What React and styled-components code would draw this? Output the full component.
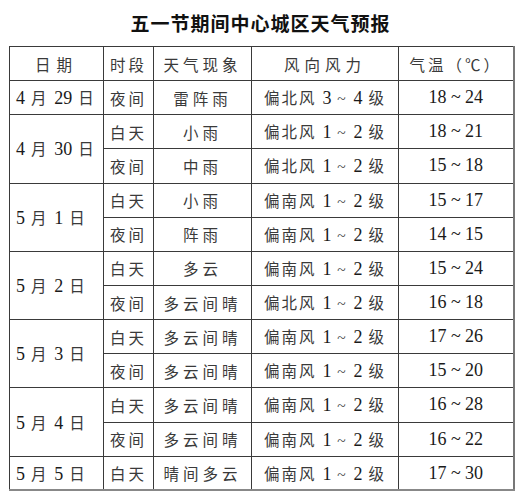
import React from "react";
import styled, { createGlobalStyle } from "styled-components";

const GlobalStyle = createGlobalStyle`
  html, body {
    margin: 0;
    padding: 0;
    background: #ffffff;
  }
`;

const Page = styled.div`
  width: 525px;
  height: 500px;
  box-sizing: border-box;
  padding: 9px 0 0 9px;
  font-family: "Liberation Serif", "Noto Sans CJK SC", serif;
  color: #333;
`;

const Title = styled.h1`
  margin: 0;
  width: 503px;
  height: 28px;
  line-height: 28px;
  text-align: center;
  font-family: "Noto Sans CJK SC", sans-serif;
  font-size: 19px;
  font-weight: 700;
  letter-spacing: 1px;
  color: #111;
`;

const Table = styled.table`
  margin-top: 9px;
  width: 504px;
  border-collapse: collapse;
  table-layout: fixed;
  border-right: 2px solid #777;
  border-bottom: 2px solid #888;
`;

const Cell = styled.td`
  height: 34.15px;
  padding: 0;
  box-sizing: border-box;
  border: 1px solid #3a3a3a;
  font-size: ${(p) => (p.num ? "18px" : "15.5px")};
  letter-spacing: ${(p) => p.spacing || "4px"};
  text-align: ${(p) => (p.left ? "left" : "center")};
  padding-left: ${(p) => (p.left ? "6px" : "0")};
  white-space: nowrap;
  color: #3a3a3a;
`;

const HeadCell = styled(Cell).attrs({ as: "th" })`
  font-weight: 400;
`;

const Num = styled.span`
  font-family: "Liberation Serif", serif;
  font-size: 18px;
  letter-spacing: 0;
  color: #1a1a1a;
`;

const Temp = styled(Cell)`
  font-family: "Liberation Serif", serif;
  color: #1a1a1a;
`;

const rows = [
  { date: ["4", "29"], items: [["夜间", "雷阵雨", "北", "3", "4", "18 ~ 24"]] },
  {
    date: ["4", "30"],
    items: [
      ["白天", "小雨", "北", "1", "2", "18 ~ 21"],
      ["夜间", "中雨", "北", "1", "2", "15 ~ 18"],
    ],
  },
  {
    date: ["5", "1"],
    items: [
      ["白天", "小雨", "南", "1", "2", "15 ~ 17"],
      ["夜间", "阵雨", "南", "1", "2", "14 ~ 15"],
    ],
  },
  {
    date: ["5", "2"],
    items: [
      ["白天", "多云", "南", "1", "2", "15 ~ 24"],
      ["夜间", "多云间晴", "北", "1", "2", "16 ~ 18"],
    ],
  },
  {
    date: ["5", "3"],
    items: [
      ["白天", "多云间晴", "南", "1", "2", "17 ~ 26"],
      ["夜间", "多云间晴", "南", "1", "2", "15 ~ 20"],
    ],
  },
  {
    date: ["5", "4"],
    items: [
      ["白天", "多云间晴", "南", "1", "2", "16 ~ 28"],
      ["夜间", "多云间晴", "南", "1", "2", "16 ~ 22"],
    ],
  },
  { date: ["5", "5"], items: [["白天", "晴间多云", "南", "1", "2", "17 ~ 30"]] },
];

const DateLabel = ({ m, d }) => (
  <>
    <Num>{m}</Num> 月 <Num>{d}</Num> 日
  </>
);

const Wind = ({ dir, a, b }) => (
  <>
    偏{dir}风 <Num>{a}</Num> ~ <Num>{b}</Num> 级
  </>
);

export default function App() {
  return (
    <Page>
      <GlobalStyle />
      <Title>五一节期间中心城区天气预报</Title>
      <Table>
        <colgroup>
          <col style={{ width: 94 }} />
          <col style={{ width: 50 }} />
          <col style={{ width: 98 }} />
          <col style={{ width: 147 }} />
          <col style={{ width: 115 }} />
        </colgroup>
        <thead>
          <tr>
            <HeadCell spacing="6px">日期</HeadCell>
            <HeadCell spacing="3px">时段</HeadCell>
            <HeadCell spacing="4px">天气现象</HeadCell>
            <HeadCell spacing="5px">风向风力</HeadCell>
            <HeadCell spacing="3px">气温（℃）</HeadCell>
          </tr>
        </thead>
        <tbody>
          {rows.map((r) =>
            r.items.map((it, i) => (
              <tr key={r.date.join("-") + i}>
                {i === 0 && (
                  <Cell left spacing="2px" rowSpan={r.items.length}>
                    <DateLabel m={r.date[0]} d={r.date[1]} />
                  </Cell>
                )}
                <Cell spacing="3px">{it[0]}</Cell>
                <Cell spacing="4px">{it[1]}</Cell>
                <Cell spacing="2px">
                  <Wind dir={it[2]} a={it[3]} b={it[4]} />
                </Cell>
                <Temp num spacing="0">
                  {it[5]}
                </Temp>
              </tr>
            ))
          )}
        </tbody>
      </Table>
    </Page>
  );
}
